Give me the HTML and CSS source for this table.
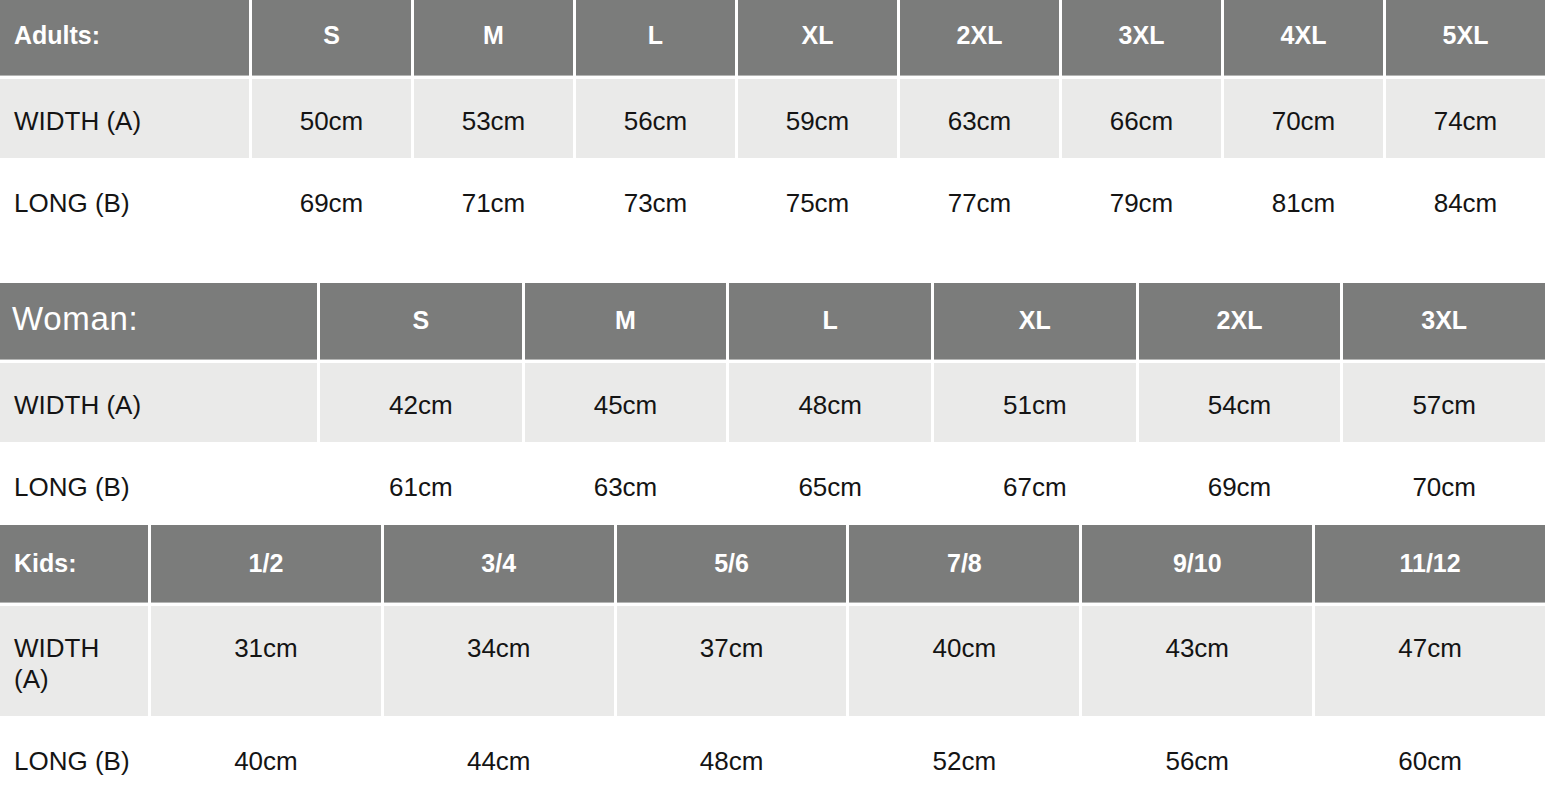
FILE: index.html
```html
<!DOCTYPE html>
<html lang="en">
<head>
<meta charset="utf-8">
<title>Size chart</title>
<link rel="stylesheet" href="styles.css">
</head>
<body>
<div class="chart">
  <div class="tbl tbl-adults">
    <div class="hd hd-first lbl">Adults:</div>
    <div class="hd">S</div><div class="hd">M</div><div class="hd">L</div><div class="hd">XL</div>
    <div class="hd">2XL</div><div class="hd">3XL</div><div class="hd">4XL</div><div class="hd">5XL</div>

    <div class="cell alt lbl">WIDTH (A)</div>
    <div class="cell alt">50cm</div><div class="cell alt">53cm</div><div class="cell alt">56cm</div><div class="cell alt">59cm</div>
    <div class="cell alt">63cm</div><div class="cell alt">66cm</div><div class="cell alt">70cm</div><div class="cell alt">74cm</div>

    <div class="cell lbl">LONG (B)</div>
    <div class="cell">69cm</div><div class="cell">71cm</div><div class="cell">73cm</div><div class="cell">75cm</div>
    <div class="cell">77cm</div><div class="cell">79cm</div><div class="cell">81cm</div><div class="cell">84cm</div>
  </div>

  <div class="tbl tbl-woman">
    <div class="hd lbl woman">Woman:</div>
    <div class="hd">S</div><div class="hd">M</div><div class="hd">L</div><div class="hd">XL</div>
    <div class="hd">2XL</div><div class="hd">3XL</div>

    <div class="cell alt lbl">WIDTH (A)</div>
    <div class="cell alt">42cm</div><div class="cell alt">45cm</div><div class="cell alt">48cm</div>
    <div class="cell alt">51cm</div><div class="cell alt">54cm</div><div class="cell alt">57cm</div>

    <div class="cell last lbl">LONG (B)</div>
    <div class="cell last">61cm</div><div class="cell last">63cm</div><div class="cell last">65cm</div>
    <div class="cell last">67cm</div><div class="cell last">69cm</div><div class="cell last">70cm</div>
  </div>

  <div class="tbl tbl-kids">
    <div class="hd hd-kids lbl">Kids:</div>
    <div class="hd hd-kids">1/2</div><div class="hd hd-kids">3/4</div><div class="hd hd-kids">5/6</div>
    <div class="hd hd-kids">7/8</div><div class="hd hd-kids">9/10</div><div class="hd hd-kids">11/12</div>

    <div class="cell alt lbl">WIDTH<br>(A)</div>
    <div class="cell alt">31cm</div><div class="cell alt">34cm</div><div class="cell alt">37cm</div>
    <div class="cell alt">40cm</div><div class="cell alt">43cm</div><div class="cell alt">47cm</div>

    <div class="cell lbl">LONG (B)</div>
    <div class="cell">40cm</div><div class="cell">44cm</div><div class="cell">48cm</div>
    <div class="cell">52cm</div><div class="cell">56cm</div><div class="cell">60cm</div>
  </div>
</div>
</body>
</html>
```

FILE: styles.css
```css
html, body {
  margin: 0;
  padding: 0;
  background: #ffffff;
}

body {
  font-family: "Liberation Sans", Arial, sans-serif;
  color: #141414;
  width: 1545px;
  overflow: hidden;
}

.chart {
  display: flex;
  flex-direction: column;
}

.tbl {
  display: grid;
  column-gap: 3px;
  row-gap: 3px;
}

.tbl-adults {
  grid-template-columns: 249px repeat(8, 1fr);
  margin-bottom: 43px;
}

.tbl-woman {
  grid-template-columns: 317px repeat(6, 1fr);
  margin-bottom: 3px;
}

.tbl-kids {
  grid-template-columns: 148px repeat(6, 1fr);
}

.hd {
  background: #7b7c7b;
  color: #ffffff;
  font-weight: bold;
  font-size: 25px;
  line-height: 30px;
  height: 77px;
  box-sizing: border-box;
  padding-top: 22px;
  text-align: center;
  box-shadow: inset 0 -1px 0 #b4b5b4;
}

.tbl-adults .hd {
  height: 76px;
  padding-top: 20px;
}

.hd-kids {
  height: 78px;
  padding-top: 23px;
}

.hd.lbl {
  text-align: left;
  padding-left: 14px;
}

.hd.woman {
  font-weight: normal;
  font-size: 33px;
  letter-spacing: 0.7px;
  padding-left: 12px;
  padding-top: 21px;
}

.cell {
  font-size: 26px;
  line-height: 31px;
  padding: 27px 0 21px;
  text-align: center;
}

.cell.alt {
  background: #eaeae9;
}

.cell.last {
  padding-bottom: 19px;
}

.cell.lbl {
  text-align: left;
  padding-left: 14px;
}
```
